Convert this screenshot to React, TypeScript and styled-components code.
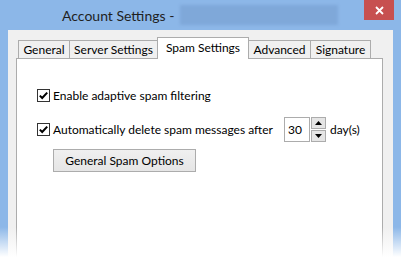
import React from "react"
import styled, { createGlobalStyle } from "styled-components"

const GlobalStyle = createGlobalStyle`
    html, body {
        margin: 0;
        padding: 0;
        width: 401px;
        height: 257px;
        overflow: hidden;
        background: #fff;
    }
    body {
        font-family: Lato, "Noto Sans", sans-serif;
        font-size: 12px;
        color: #000;
    }
`

const Window = styled.div`
    position: relative;
    width: 401px;
    height: 257px;
    background: #8cb7e8;
    display: flex;
    flex-direction: column;
    overflow: hidden;
`

const TitleBar = styled.div`
    height: 30px;
    display: flex;
    align-items: center;
    padding-left: 62px;
    position: relative;
`

const Title = styled.span`
    font-size: 14px;
    color: #1f1f1f;
    white-space: nowrap;
`

const Redacted = styled.span`
    display: block;
    width: 158px;
    height: 20px;
    margin-left: 6px;
    background: #7fa8d9;
    filter: blur(1.5px);
`

const CloseButton = styled.div`
    position: absolute;
    top: 0;
    left: 364px;
    width: 30px;
    height: 20px;
    background: #c75050;
    display: flex;
    align-items: center;
    justify-content: center;
`

const Client = styled.div`
    flex: 1;
    margin: 0 8px;
    background: #f0f0f0;
    padding: 7px 10px 0 8px;
    display: flex;
    flex-direction: column;
`

const TabStrip = styled.div`
    display: flex;
    align-items: flex-end;
    padding-left: 2px;
    margin-bottom: -1px;
    position: relative;
    z-index: 1;
`

const Tab = styled.div<{ $active?: boolean; $w: number }>`
    box-sizing: border-box;
    width: ${(p) => p.$w}px;
    height: ${(p) => (p.$active ? 22 : 18)}px;
    margin-bottom: ${(p) => (p.$active ? 0 : 1)}px;
    margin-left: -1px;
    border: 1px solid #acacac;
    border-bottom: none;
    background: ${(p) => (p.$active ? "#fff" : "#f0f0f0")};
    display: flex;
    align-items: ${(p) => (p.$active ? "flex-start" : "center")};
    padding-top: ${(p) => (p.$active ? 2 : 0)}px;
    justify-content: center;
    white-space: nowrap;
    position: relative;
    z-index: ${(p) => (p.$active ? 2 : 1)};
    &:first-child {
        margin-left: 0;
    }
`

const Panel = styled.div`
    flex: 1;
    background: #fff;
    border: 1px solid #acacac;
    border-bottom: none;
    padding: 28px 0 0 20px;
    display: flex;
    flex-direction: column;
`

const Row = styled.div<{ $h: number; $gap?: number }>`
    display: flex;
    align-items: center;
    height: ${(p) => p.$h}px;
    margin-top: ${(p) => p.$gap ?? 0}px;
    white-space: nowrap;
`

const Box = styled.span`
    box-sizing: border-box;
    width: 13px;
    height: 13px;
    border: 1px solid #333;
    background: #fff;
    display: flex;
    align-items: center;
    justify-content: center;
    margin-right: 3px;
`

const SpinInput = styled.div`
    box-sizing: border-box;
    width: 26px;
    height: 25px;
    border: 1px solid #acacac;
    background: #fff;
    padding-left: 3px;
    display: flex;
    align-items: center;
    margin-left: 11px;
`

const SpinButtons = styled.div`
    display: flex;
    flex-direction: column;
    gap: 1px;
    margin-left: 1px;
    margin-right: 4px;
`

const SpinButton = styled.div`
    box-sizing: border-box;
    width: 15px;
    height: 12px;
    border: 1px solid #acacac;
    background: #e5e5e5;
    display: flex;
    align-items: center;
    justify-content: center;
`

const Button = styled.div`
    box-sizing: border-box;
    width: 143px;
    height: 23px;
    margin: 7px 0 0 16px;
    border: 1px solid #acacac;
    background: linear-gradient(#f0f0f0, #e5e5e5);
    display: flex;
    align-items: center;
    justify-content: center;
`

const Fade = styled.div`
    position: absolute;
    left: 0;
    right: 0;
    bottom: 0;
    height: 30px;
    background: linear-gradient(rgba(255, 255, 255, 0), #fff);
    pointer-events: none;
`

const Check = () => (
    <svg width="11" height="11" viewBox="0 0 11 11">
        <path d="M1.8 5.6 L4.2 8 L9.2 2.6" fill="none" stroke="#000" strokeWidth="2" />
    </svg>
)

const Arrow = ({ up }: { up?: boolean }) => (
    <svg width="7" height="4" viewBox="0 0 7 4">
        <path d={up ? "M0 4 L3.5 0 L7 4 Z" : "M0 0 L7 0 L3.5 4 Z"} fill="#000" />
    </svg>
)

const tabs = [
    { label: "General", w: 52 },
    { label: "Server Settings", w: 89 },
    { label: "Spam Settings", w: 92, active: true },
    { label: "Advanced", w: 63 },
    { label: "Signature", w: 61 },
]

export default function App() {
    return (
        <>
            <GlobalStyle />
            <Window>
                <TitleBar>
                    <Title>Account Settings -</Title>
                    <Redacted />
                    <CloseButton>
                        <svg width="9" height="9" viewBox="0 0 9 9">
                            <path d="M1 1 L8 8 M8 1 L1 8" stroke="#fff" strokeWidth="1.8" />
                        </svg>
                    </CloseButton>
                </TitleBar>
                <Client>
                    <TabStrip>
                        {tabs.map((t) => (
                            <Tab key={t.label} $w={t.w} $active={t.active}>
                                {t.label}
                            </Tab>
                        ))}
                    </TabStrip>
                    <Panel>
                        <Row $h={16}>
                            <Box><Check /></Box>
                            Enable adaptive spam filtering
                        </Row>
                        <Row $h={25} $gap={14}>
                            <Box><Check /></Box>
                            Automatically delete spam messages after
                            <SpinInput>30</SpinInput>
                            <SpinButtons>
                                <SpinButton><Arrow up /></SpinButton>
                                <SpinButton><Arrow /></SpinButton>
                            </SpinButtons>
                            day(s)
                        </Row>
                        <Button>General Spam Options</Button>
                    </Panel>
                </Client>
                <Fade />
            </Window>
        </>
    )
}
